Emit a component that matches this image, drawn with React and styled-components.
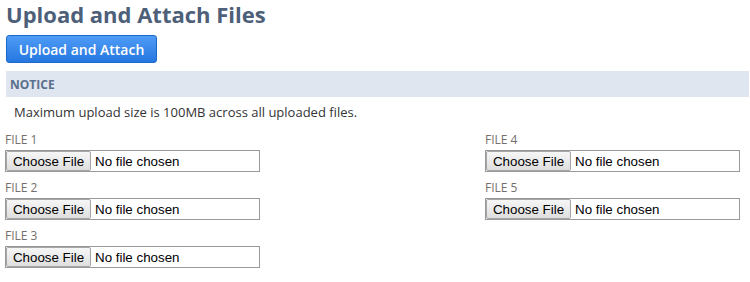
import React from 'react';
import styled, { createGlobalStyle } from 'styled-components';

const GlobalStyle = createGlobalStyle`
  body {
    margin: 0;
    background: #fff;
    font-family: 'Open Sans', Arial, sans-serif;
  }
`;

const Page = styled.div`
  width: 750px;
  height: 282px;
  overflow: hidden;
`;

const Title = styled.h1`
  margin: 0;
  padding: 0 0 0 6px;
  font-size: 22px;
  line-height: 28px;
  font-weight: 700;
  color: #4d5f79;
`;

const PrimaryButton = styled.button`
  display: block;
  margin: 7px 0 0 6px;
  width: 151px;
  height: 28px;
  padding: 0;
  border: 1px solid #1a68c9;
  border-radius: 3px;
  background: linear-gradient(#4f9cf6, #2577e0);
  color: #fff;
  font-family: 'Open Sans', Arial, sans-serif;
  font-size: 14px;
  font-weight: 600;
  cursor: pointer;
`;

const NoticeBar = styled.div`
  margin: 8px 1px 0 6px;
  height: 26px;
  display: flex;
  align-items: center;
  padding-left: 4px;
  background: #e0e6ef;
  color: #5a6f8b;
  font-size: 12px;
  font-weight: 700;
`;

const Message = styled.p`
  margin: 0;
  padding: 6px 0 0 14px;
  font-size: 13px;
  line-height: 18px;
  color: #333;
`;

const FileGrid = styled.div`
  display: grid;
  grid-template-columns: 480px 255px;
  grid-template-rows: repeat(3, 48px);
  padding: 12px 0 0 5px;
`;

const Field = styled.div`
  grid-column: ${({ col }) => col};
  grid-row: ${({ row }) => row};
  display: flex;
  flex-direction: column;
`;

const Label = styled.label`
  font-size: 12px;
  line-height: 14px;
  color: #756f6c;
  text-transform: uppercase;
  margin-bottom: 3px;
`;

const FileBox = styled.div`
  width: 255px;
  height: 22px;
  box-sizing: border-box;
  border: 1px solid #999;
  display: flex;
  align-items: center;
  background: #fff;
`;

const ChooseButton = styled.span`
  box-sizing: border-box;
  height: 20px;
  width: 85px;
  display: flex;
  align-items: center;
  justify-content: center;
  border: 1px solid #a6a6a6;
  border-radius: 2px;
  background: linear-gradient(#f6f6f6, #dedede);
  font-family: 'Liberation Sans', Arial, sans-serif;
  font-size: 13.33px;
  color: #000;
`;

const FileName = styled.span`
  margin-left: 4px;
  font-family: 'Liberation Sans', Arial, sans-serif;
  font-size: 13.33px;
  color: #000;
`;

const files = [
  { n: 1, col: 1, row: 1 },
  { n: 2, col: 1, row: 2 },
  { n: 3, col: 1, row: 3 },
  { n: 4, col: 2, row: 1 },
  { n: 5, col: 2, row: 2 },
];

export default function App() {
  return (
    <Page>
      <GlobalStyle />
      <Title>Upload and Attach Files</Title>
      <PrimaryButton>Upload and Attach</PrimaryButton>
      <NoticeBar>NOTICE</NoticeBar>
      <Message>Maximum upload size is 100MB across all uploaded files.</Message>
      <FileGrid>
        {files.map((f) => (
          <Field key={f.n} col={f.col} row={f.row}>
            <Label>File {f.n}</Label>
            <FileBox>
              <ChooseButton>Choose File</ChooseButton>
              <FileName>No file chosen</FileName>
            </FileBox>
          </Field>
        ))}
      </FileGrid>
    </Page>
  );
}
